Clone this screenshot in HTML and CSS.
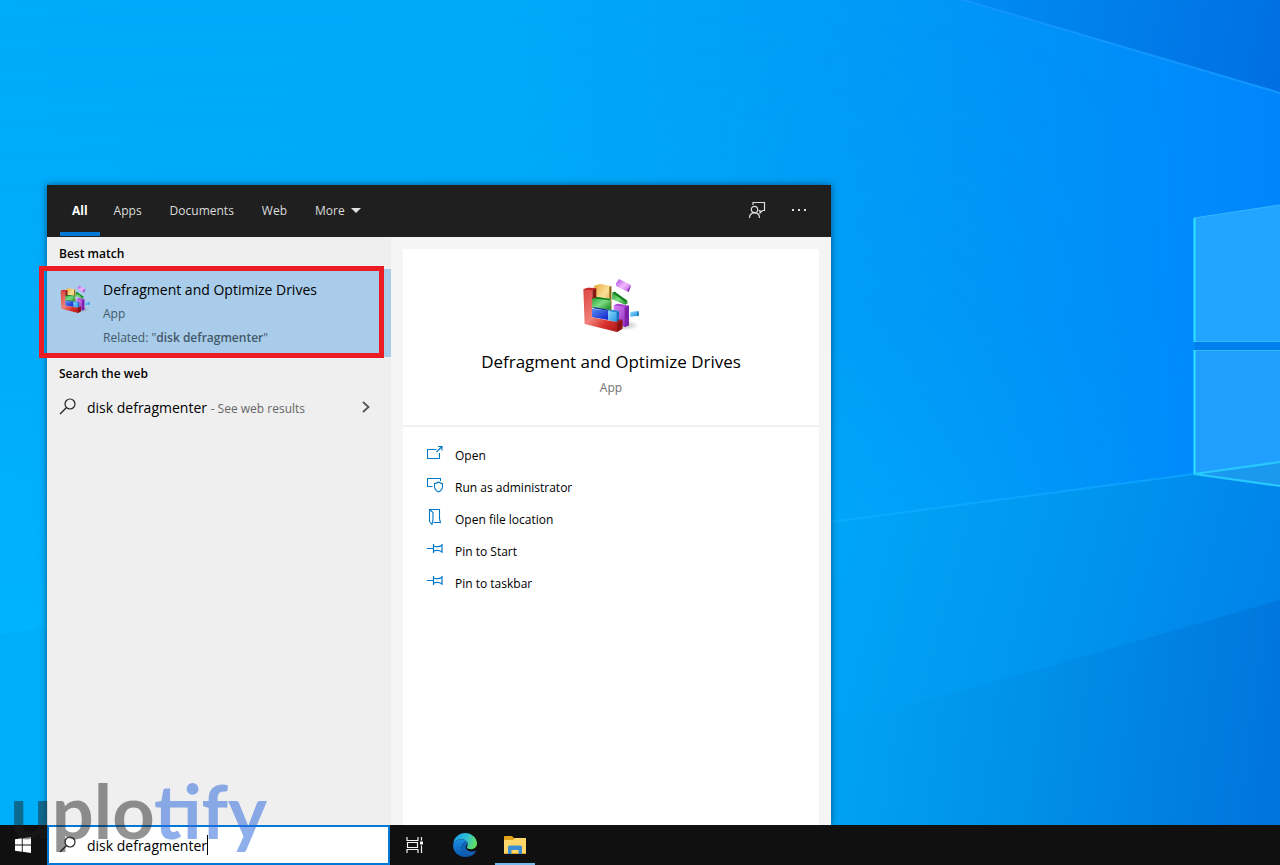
FILE: index.html
```html
<!DOCTYPE html>
<html lang="en">
<head>
<meta charset="utf-8">
<meta name="viewport" content="width=device-width, initial-scale=1">
<title>Search</title>
<link rel="stylesheet" href="styles.css">
</head>
<body>
<svg class="defs" aria-hidden="true">
  <defs>
    <linearGradient id="red" x1="0" y1="0" x2="1" y2="1"><stop offset="0" stop-color="#d9423c"/><stop offset=".45" stop-color="#f08078"/><stop offset=".7" stop-color="#d8302c"/><stop offset="1" stop-color="#a01414"/></linearGradient>
    <linearGradient id="gold" x1="0" y1="0" x2="1" y2="1"><stop offset="0" stop-color="#e8a93a"/><stop offset=".5" stop-color="#fbdf98"/><stop offset="1" stop-color="#d4952a"/></linearGradient>
    <linearGradient id="green" x1="0" y1="0" x2="1" y2="1"><stop offset="0" stop-color="#1f9a2c"/><stop offset=".5" stop-color="#7fdc84"/><stop offset="1" stop-color="#128420"/></linearGradient>
    <linearGradient id="blue" x1="0" y1="0" x2="1" y2="1"><stop offset="0" stop-color="#5a8cf4"/><stop offset="1" stop-color="#0c20c8"/></linearGradient>
    <linearGradient id="sky" x1="0" y1="0" x2="1" y2="1"><stop offset="0" stop-color="#8fdcff"/><stop offset="1" stop-color="#1b8ee0"/></linearGradient>
    <linearGradient id="violet" x1="0" y1="0" x2="1" y2="1"><stop offset="0" stop-color="#d98af4"/><stop offset="1" stop-color="#8a20b8"/></linearGradient>
    <linearGradient id="lilac" x1="0" y1="0" x2="1" y2="1"><stop offset="0" stop-color="#a94fdc"/><stop offset=".5" stop-color="#f0b8ff"/><stop offset="1" stop-color="#b04fd8"/></linearGradient>
    <radialGradient id="shade"><stop offset="0" stop-color="#555" stop-opacity=".5"/><stop offset="1" stop-color="#888" stop-opacity="0"/></radialGradient>
    <symbol id="defrag" viewBox="66 48 174 174">
      <ellipse cx="192" cy="196" rx="46" ry="16" fill="url(#shade)"/>
      <path d="M102 77 120 72 154 78 154 150 104 120z" fill="url(#gold)"/>
      <path d="M148 80 154 78V150L148 148z" fill="#8a6418"/>
      <path d="M157 98 164 95 202 122 203 130 196 134 156 118z" fill="url(#green)"/>
      <path d="M157 98 164 95 202 122 196 126z" fill="#12801e"/>
      <path d="M96 114 104 110 152 117V150L96 144z" fill="url(#green)"/>
      <path d="M96 114 104 110 152 117 148 121z" fill="#0d7a1c"/>
      <path d="M161 136 174 131 207 137 207 196 194 201 161 184z" fill="url(#violet)"/>
      <path d="M194 141 207 137V196L194 201z" fill="#7d22a8"/>
      <path d="M161 136 174 131 207 137 194 141z" fill="#a847d0"/>
      <path d="M96 146 145 152V180L96 172z" fill="url(#blue)"/>
      <path d="M96 144 104 142 147 149 145 153z" fill="#102b9c"/>
      <path d="M145 153 153 149 177 153V181L168 186 145 181z" fill="url(#sky)"/>
      <path d="M170 157 177 153V181L170 185z" fill="#1870b8"/>
      <path d="M145 153 153 149 177 153 170 157z" fill="#2a86cc"/>
      <path d="M70 88 84 83 109 86 97 91 96 172 172 187 187 180V206L171 216 74 192z" fill="url(#red)"/>
      <path d="M97 91 109 84V112L97 116z" fill="#8e1512"/>
      <path d="M70 88 84 83 109 84 97 91z" fill="#c22a26"/>
      <path d="M172 189 187 179V206L171 216z" fill="#8b1212"/>
      <path d="M96 172 172 187 187 179 180 178 168 186z" fill="#9c1a18"/>
      <path d="M177 57 213 75 206 97 168 78 168 70z" fill="url(#lilac)"/>
      <path d="M213 75 206 97 202 90z" fill="#8c30b8"/>
      <path d="M211 156 235 153 237 167 211 170z" fill="url(#sky)"/>
      <path d="M231 156 235 153 237 167 232 169z" fill="#1e80bb"/>
    </symbol>
    <symbol id="glass" viewBox="0 0 18 18">
      <g fill="none" stroke="#222"><circle cx="11" cy="6" r="5" stroke-width="1.200"/><path d="M7.300 9.700 1 16" stroke-width="1.300"/></g>
    </symbol>
    <symbol id="pin" viewBox="0 0 16 16">
      <path d="M0 7.500h6.500M6.500 3v9M6.500 5q4.500 1.600 8.500-.8v6.600q-4-2.400-8.500-.8M15 3v9" fill="none" stroke="#0078c8" stroke-width="1.200"/>
    </symbol>
  </defs>
</svg>

<div class="screen">
  <svg class="wallpaper" viewBox="0 0 1280 865" preserveAspectRatio="none" aria-hidden="true">
    <defs>
      <linearGradient id="sky-base" x1="0" y1="0" x2="1" y2="0">
        <stop offset="0" stop-color="#00abfb"/><stop offset=".4" stop-color="#00a9fa"/><stop offset=".66" stop-color="#009cf6"/><stop offset=".82" stop-color="#0092f8"/><stop offset="1" stop-color="#0086fc"/>
      </linearGradient>
      <linearGradient id="corner" gradientUnits="userSpaceOnUse" x1="970" y1="0" x2="1280" y2="60">
        <stop offset="0" stop-color="#008cf0"/><stop offset="1" stop-color="#006fe3"/>
      </linearGradient>
      <linearGradient id="ground" gradientUnits="userSpaceOnUse" x1="831" y1="560" x2="1290" y2="680">
        <stop offset="0" stop-color="#00a5f8"/><stop offset=".5" stop-color="#0095ee"/><stop offset="1" stop-color="#0080e8"/>
      </linearGradient>
      <linearGradient id="ground-low" gradientUnits="userSpaceOnUse" x1="831" y1="700" x2="1280" y2="760">
        <stop offset="0" stop-color="#00a3f4"/><stop offset=".45" stop-color="#0090e9"/><stop offset="1" stop-color="#0074db"/>
      </linearGradient>
      <linearGradient id="beam" gradientUnits="userSpaceOnUse" x1="831" y1="522" x2="1194" y2="474">
        <stop offset="0" stop-color="#0cacff"/><stop offset="1" stop-color="#0aa0ff"/>
      </linearGradient>
      <linearGradient id="glow" x1="0" y1="0" x2="0" y2="1">
        <stop offset="0" stop-color="#00b4ff" stop-opacity="0"/><stop offset=".5" stop-color="#00b4ff" stop-opacity=".12"/><stop offset="1" stop-color="#00b6ff" stop-opacity=".75"/>
      </linearGradient>
      <linearGradient id="fade" x1="0" y1="0" x2="1" y2="0">
        <stop offset="0" stop-color="#fff"/><stop offset=".6" stop-color="#fff"/><stop offset="1" stop-color="#000"/>
      </linearGradient>
      <mask id="left-side"><rect width="1190" height="865" fill="url(#fade)"/></mask>
    </defs>
    <rect width="1280" height="865" fill="url(#sky-base)"/>
    <rect width="1190" height="640" fill="url(#glow)" mask="url(#left-side)"/>
    <path d="M0 634 831 522V865H0z" fill="#00aff9"/>
    <path d="M960 0H1280V93z" fill="url(#corner)"/>
    <path d="M960-1 1280 93" stroke="#1297ff" stroke-width="2"/>
    <path d="M831 522 1194 474 1280 487V865H831z" fill="url(#ground)"/>
    <path d="M831 727 1050 666 1280 600V865H831z" fill="url(#ground-low)"/>
    <path d="M831 522 1194 474" stroke="url(#beam)" stroke-width="2"/>
    <path d="M1194 218 1280 205V342H1194z" fill="#21a5ff"/>
    <path d="M1194 350H1280V486L1194 474z" fill="#209fff"/>
    <path d="M1194 474 1280 462V486z" fill="#1b99ef"/>
    <path d="M1194 342H1280V350H1194z" fill="#0080ee"/>
    <path d="M1194 218 1280 205M1194 341.500H1280M1194 350.500H1280" stroke="#36b7ff" fill="none"/>
    <path d="M1194.500 218V342M1194.500 350V474" stroke="#2fe3ff" stroke-width="2"/>
    <path d="M1280 462 1194 474 1280 486" stroke="#28c9ff" stroke-width="2" fill="none"/>
  </svg>

  <main class="desktop">
    <section class="search-panel" aria-label="Search">
      <header class="tabs">
        <nav class="tab-list">
          <button class="tab tab-active" type="button">All</button>
          <button class="tab" type="button">Apps</button>
          <button class="tab" type="button">Documents</button>
          <button class="tab" type="button">Web</button>
          <button class="tab tab-more" type="button">More
            <svg width="10" height="5" viewBox="0 0 10 5" aria-hidden="true"><path d="M0 0H10L5 5z" fill="#e0e0e0"/></svg>
          </button>
        </nav>
        <div class="tools">
          <button class="tool" type="button" aria-label="Feedback">
            <svg width="18" height="18" viewBox="0 0 18 18" fill="none" stroke="#e0e0e0" stroke-width="1.200" aria-hidden="true"><circle cx="6.500" cy="8.500" r="3.200"/><path d="M1.500 17q0-5.200 5-5.200t5 5.200M5 4V1.500H16.500V9.500H14.500L12 12V9.500H10.700"/></svg>
          </button>
          <button class="tool" type="button" aria-label="Options">
            <svg width="18" height="18" viewBox="0 0 18 18" fill="#e0e0e0" aria-hidden="true"><path d="M2 8h2v2H2zM8 8h2v2H8zM14 8h2v2h-2z"/></svg>
          </button>
        </div>
      </header>

      <div class="results">
        <h2 class="group-title">Best match</h2>
        <div class="best">
          <button class="best-result" type="button">
            <svg class="app-icon-small" aria-hidden="true"><use href="#defrag"/></svg>
            <span class="best-text">
              <span class="best-name">Defragment and Optimize Drives</span>
              <span class="best-note">App</span>
              <span class="best-note">Related: "<b>disk defragmenter</b>"</span>
            </span>
          </button>
          <span class="marker"></span>
        </div>
        <h2 class="group-title">Search the web</h2>
        <button class="web-result" type="button">
          <svg class="glass" aria-hidden="true"><use href="#glass"/></svg>
          <span class="web-query">disk defragmenter <span class="web-hint">- See web results</span></span>
          <svg width="8" height="12" viewBox="0 0 8 12" fill="none" stroke="#555" stroke-width="1.800" aria-hidden="true"><path d="M1 1 6.500 6 1 11"/></svg>
        </button>
      </div>

      <div class="detail">
        <article class="card">
          <header class="card-head">
            <svg class="app-icon-large" aria-hidden="true"><use href="#defrag"/></svg>
            <h1 class="card-title">Defragment and Optimize Drives</h1>
            <p class="card-kind">App</p>
          </header>
          <div class="actions">
            <button class="action" type="button">
              <svg class="action-icon" viewBox="0 0 16 16" aria-hidden="true"><path d="M9.500 4.500H.5V13.500H12.500V8M9.500 7 14.500 2M11 1.500H15V5.500" /></svg>Open</button>
            <button class="action" type="button">
              <svg class="action-icon" viewBox="0 0 16 16" aria-hidden="true"><path d="M5.500 9.500H.5V1.500H13.500V4M11.500 5Q13.500 6.500 15.500 6.500V9.500Q15.500 13 11.500 15 7.500 13 7.500 9.500V6.500Q9.500 6.500 11.500 5z"/></svg>Run as administrator</button>
            <button class="action" type="button">
              <svg class="action-icon" viewBox="0 0 16 16" aria-hidden="true"><path d="M2.500 12.500V.5H12.500V10L13.500 13.500H6.500M2.500.5 6 3.500V10.500L5 15.500 2.500 12.500"/></svg>Open file location</button>
            <button class="action" type="button">
              <svg class="action-icon" aria-hidden="true"><use href="#pin"/></svg>Pin to Start</button>
            <button class="action" type="button">
              <svg class="action-icon" aria-hidden="true"><use href="#pin"/></svg>Pin to taskbar</button>
          </div>
        </article>
      </div>
    </section>
  </main>

  <footer class="taskbar">
    <button class="start" type="button" aria-label="Start">
      <svg width="16" height="16" viewBox="0 0 16 16" fill="#fff" aria-hidden="true"><path d="M0 2.300 6.800 1.300V7.500H0zM7.700 1.200 16 0V7.500H7.700zM0 8.400H6.800V14.700L0 13.700zM7.700 8.400H16V16L7.700 14.800z"/></svg>
    </button>
    <label class="search-box">
      <svg class="glass" aria-hidden="true"><use href="#glass"/></svg>
      <input class="search-input" type="text" value="disk defragmenter" aria-label="Type here to search"><span class="caret"></span>
    </label>
    <button class="task" type="button" aria-label="Task View">
      <svg width="18" height="16" viewBox="0 0 18 16" fill="none" stroke="#f2f2f2" stroke-width="1.200" aria-hidden="true"><path d="M1 0V3.500H12V0M1 16V12.500H12V16M1.500 5.500H11.500V10.500H1.500zM15.500 0V3.500M15.500 8.500V16"/><path d="M14 4.500h3v3h-3z" fill="#fff" stroke="none"/></svg>
    </button>
    <button class="task" type="button" aria-label="Microsoft Edge">
      <svg width="24" height="24" viewBox="0 0 24 24" aria-hidden="true">
        <defs>
          <linearGradient id="edge-top" x1="0" y1=".3" x2="1" y2=".6"><stop offset="0" stop-color="#1a9ee6"/><stop offset=".5" stop-color="#2ebfd6"/><stop offset="1" stop-color="#66e25a"/></linearGradient>
          <linearGradient id="edge-low" x1="0" y1="0" x2="0" y2="1"><stop offset="0" stop-color="#1a8ee4"/><stop offset="1" stop-color="#0b55ae"/></linearGradient>
        </defs>
        <path d="M.3 10.500C1 4.300 6 0 12 0c7 0 12 5 12 10.600 0 3.400-2.600 5.600-5.800 5.600-2.600 0-4.400-.9-4.400-2 0-.6.900-1 .9-2.600C14.700 8.500 12 6.300 8.600 6.300 4.600 6.300 1.500 8.200.3 10.500z" fill="url(#edge-top)"/>
        <path d="M.1 12C.4 8.500 4.200 6.300 8.600 6.300c3 0 5 1.600 5.700 3.400C11.500 8.500 8.600 10.800 8.600 14.400c0 4.800 4.600 8 9.300 7.900.9 0 1.800-.2 2.400-.5C18.200 23.300 15.200 24 12 24 5.300 24-.4 18.800.1 12z" fill="url(#edge-low)"/>
        <path d="M14.300 9.700C11.500 8.500 8.600 10.800 8.600 14.400c0 5.600 5.600 8.700 10.600 7.700 1.600-.6 3-2.300 3.700-3.800.3-.6-.1-.9-.6-.6-3.700 2-10 .4-9.500-4.200.1-1.300 1.200-1.300 1.500-2z" fill="#1263b8"/>
      </svg>
    </button>
    <button class="task task-open" type="button" aria-label="File Explorer">
      <svg width="22" height="18" viewBox="0 0 22 18" aria-hidden="true"><path d="M0 1Q0 0 1 0H8L10 2H22V18H0z" fill="#e0a21a"/><path d="M0 4H9L11 2H21Q22 2 22 3V17H0z" fill="#ffd667"/><path d="M4 18V11Q4 9.500 5.500 9.500H16.500Q18 9.500 18 11V18H14.500V14H7.500V18z" fill="#3a8fd2"/></svg>
    </button>
  </footer>

  <div class="watermark" aria-hidden="true"><span class="mark-dark">uplo</span><span class="mark-blue">tify</span></div>
</div>
</body>
</html>
```
FILE: styles.css
```css
* {
  box-sizing: border-box;
}

body {
  margin: 0;
  font-family: "Open Sans", "Noto Sans", sans-serif;
  font-size: 12px;
  color: #000;
}

button {
  margin: 0;
  padding: 0;
  border: 0;
  background: none;
  color: inherit;
  font: inherit;
  text-align: left;
}

h1,
h2,
p {
  margin: 0;
}

svg {
  flex: none;
}

.defs {
  position: absolute;
  width: 0;
  height: 0;
}

.screen {
  position: relative;
  display: flex;
  flex-direction: column;
  min-height: 100vh;
  overflow: hidden;
}

.wallpaper {
  position: absolute;
  inset: 0;
  width: 100%;
  height: 100%;
}

.desktop {
  position: relative;
  flex: 1;
  display: flex;
  padding: 185px 0 0 47px;
}

/* Search flyout */
.search-panel {
  display: grid;
  grid-template-columns: 344px 1fr;
  grid-template-rows: 52px 1fr;
  width: 784px;
  max-width: 100%;
  background: #f5f5f5;
  box-shadow: 0 0 7px rgba(0, 30, 60, 0.6);
}

.tabs {
  grid-column: 1 / -1;
  display: flex;
  justify-content: space-between;
  padding: 0 11px 0 13px;
  background: #1f1f1f;
  color: #dcdcdc;
}

.tab-list,
.tools {
  display: flex;
}

.tab-list {
  gap: 2px;
}

.tab {
  display: flex;
  align-items: center;
  gap: 6px;
  padding: 0 12px;
  border-bottom: 4px solid transparent;
  border-top: 3px solid transparent;
  margin-bottom: 1px;
  font-size: 12px;
}

.tab + .tab {
  padding: 0 14px 0 12px;
}

.tab-active {
  border-bottom-color: #0078d7;
  color: #fff;
  font-weight: 700;
}

.tool {
  display: grid;
  place-items: center;
  width: 42px;
  padding-bottom: 2px;
}

.results {
  background: #efefef;
}

.group-title {
  padding: 2px 0 0 12px;
  font-size: 12px;
  font-weight: 600;
  line-height: 30px;
}

.best {
  position: relative;
}

.best-result {
  display: flex;
  gap: 13px;
  width: 100%;
  padding: 9px 13px 7px;
  background: #a8cce9;
}

.app-icon-small {
  width: 30px;
  height: 30px;
  margin-top: 6px;
}

.best-text {
  display: grid;
  line-height: 24px;
}

.best-name {
  font-size: 14px;
}

.best-note {
  color: #44586a;
}

.best-note b {
  font-weight: 600;
}

.marker {
  position: absolute;
  inset: -3px 7px -1px -8px;
  border: 5px solid #ec1c24;
}

.web-result {
  display: flex;
  align-items: center;
  gap: 10px;
  width: 100%;
  height: 36px;
  padding: 0 21px 0 12px;
}

.web-query {
  flex: 1;
  font-size: 14px;
}

.web-hint {
  font-size: 12px;
  color: #666;
}

.glass {
  width: 18px;
  height: 18px;
}

.detail {
  display: grid;
  padding: 12px 12px 0;
}

.card {
  background: #fff;
}

.card-head {
  display: flex;
  flex-direction: column;
  align-items: center;
  padding: 27px 0 25px;
  border-bottom: 2px solid #f0f0f0;
}

.app-icon-large {
  width: 58px;
  height: 58px;
}

.card-title {
  margin-top: 14px;
  font-size: 17px;
  font-weight: 400;
  line-height: 28px;
}

.card-kind {
  line-height: 24px;
  color: #707070;
}

.actions {
  display: grid;
  padding: 12px 24px;
}

.action {
  display: flex;
  align-items: center;
  gap: 12px;
  height: 32px;
}

.action-icon {
  width: 16px;
  height: 16px;
  margin-bottom: 4px;
  fill: none;
  stroke: #0078c8;
  stroke-width: 1.1;
}

/* Taskbar */
.taskbar {
  position: relative;
  display: flex;
  height: 40px;
  background: #101010;
}

.start,
.task {
  display: grid;
  place-items: center;
}

.start {
  width: 47px;
  padding-right: 2px;
}

.task {
  width: 50px;
}

.task-open {
  background: linear-gradient(#76b9ed, #76b9ed) bottom / 40px 2px no-repeat;
}

.search-box {
  display: flex;
  align-items: center;
  gap: 10px;
  width: 343px;
  padding: 0 10px;
  border: 2px solid #0078d7;
  background: #fff;
}

.search-input {
  field-sizing: content;
  padding: 0;
  border: 0;
  outline: 0;
  background: none;
  color: #000;
  font: inherit;
  font-size: 14px;
}

.caret {
  width: 1px;
  height: 20px;
  margin-left: -10px;
  background: #000;
}

/* Brand overlay */
.watermark {
  position: absolute;
  bottom: 12px;
  left: 10px;
  font-family: Lato, sans-serif;
  font-size: 74px;
  font-weight: 700;
  line-height: 84px;
  pointer-events: none;
}

.mark-dark {
  color: rgba(30, 30, 30, 0.48);
}

.mark-blue {
  color: rgba(48, 106, 220, 0.54);
}
```
